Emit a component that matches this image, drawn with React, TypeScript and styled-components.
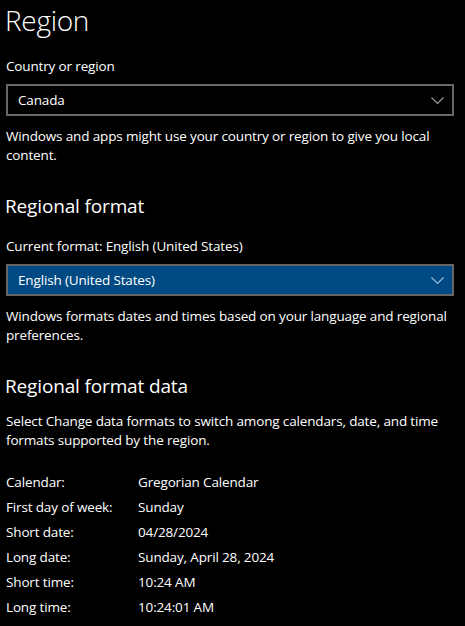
import styled, { createGlobalStyle } from "styled-components";

const GlobalStyle = createGlobalStyle`
  html, body {
    margin: 0;
    padding: 0;
    background: #000000;
  }
  body {
    font-family: "Open Sans", "Noto Sans", sans-serif;
    color: #ffffff;
  }
`;

interface DropdownProps {
  value: string;
  selected?: boolean;
}

const rows: [string, string][] = [
  ["Calendar:", "Gregorian Calendar"],
  ["First day of week:", "Sunday"],
  ["Short date:", "04/28/2024"],
  ["Long date:", "Sunday, April 28, 2024"],
  ["Short time:", "10:24 AM"],
  ["Long time:", "10:24:01 AM"],
];

const Dropdown: React.FC<DropdownProps> = ({ value, selected = false }) => {
  return (
    <Styled_Dropdown $selected={selected}>
      <span>{value}</span>
      <Styled_Chevron width="13" height="7" viewBox="0 0 13 7" $selected={selected}>
        <polyline points="0.5,0.5 6.5,6.5 12.5,0.5" fill="none" strokeWidth="1.1" />
      </Styled_Chevron>
    </Styled_Dropdown>
  );
};

const App: React.FC = () => {
  return (
    <Styled_Page>
      <GlobalStyle />
      <Styled_PageTitle>Region</Styled_PageTitle>

      <Styled_Label>Country or region</Styled_Label>
      <Dropdown value="Canada" />
      <Styled_Description>
        Windows and apps might use your country or region to give you local
        content.
      </Styled_Description>

      <Styled_SectionTitle>Regional format</Styled_SectionTitle>
      <Styled_Label>Current format: English (United States)</Styled_Label>
      <Dropdown value="English (United States)" selected />
      <Styled_Description>
        Windows formats dates and times based on your language and regional
        preferences.
      </Styled_Description>

      <Styled_SectionTitle>Regional format data</Styled_SectionTitle>
      <Styled_Description>
        Select Change data formats to switch among calendars, date, and time
        formats supported by the region.
      </Styled_Description>

      <Styled_DataGrid>
        {rows.map(([label, value]) => (
          <Styled_DataRow key={label}>
            <span>{label}</span>
            <span>{value}</span>
          </Styled_DataRow>
        ))}
      </Styled_DataGrid>
    </Styled_Page>
  );
};

export default App;

const Styled_Page = styled.div`
  width: 465px;
  height: 626px;
  overflow: hidden;
  padding: 0 11px 0 6px;
  box-sizing: border-box;
`;

const Styled_PageTitle = styled.div`
  font-size: 28px;
  font-weight: 300;
  line-height: 40px;
  letter-spacing: -0.3px;
  margin: 0 0 0 -1px;
`;

const Styled_SectionTitle = styled.div`
  font-size: 19px;
  font-weight: 400;
  line-height: 28px;
  letter-spacing: -0.15px;
  margin: 27px 0 12px -1px;
`;

const Styled_Label = styled.div`
  font-size: 13.5px;
  letter-spacing: -0.15px;
  line-height: 20px;
  margin: 16px 0 8px;
`;

const Styled_Description = styled.div`
  font-size: 13.5px;
  letter-spacing: -0.15px;
  line-height: 19px;
  margin-top: 11px;
`;

const Styled_Dropdown = styled.div<{ $selected: boolean }>`
  height: 32px;
  box-sizing: border-box;
  border: 2px solid #666666;
  background: ${(p) => (p.$selected ? "#004a83" : "#000000")};
  display: flex;
  align-items: center;
  justify-content: space-between;
  padding: 0 8px 0 10px;
  font-size: 13.5px;
  letter-spacing: -0.15px;
`;

const Styled_Chevron = styled.svg<{ $selected: boolean }>`
  stroke: ${(p) => (p.$selected ? "#9fc0dc" : "#a0a0a0")};
`;

const Styled_DataGrid = styled.div`
  margin-top: 20px;
`;

const Styled_DataRow = styled.div`
  display: grid;
  grid-template-columns: 132px 1fr;
  font-size: 13.5px;
  letter-spacing: -0.15px;
  line-height: 25px;
`;
